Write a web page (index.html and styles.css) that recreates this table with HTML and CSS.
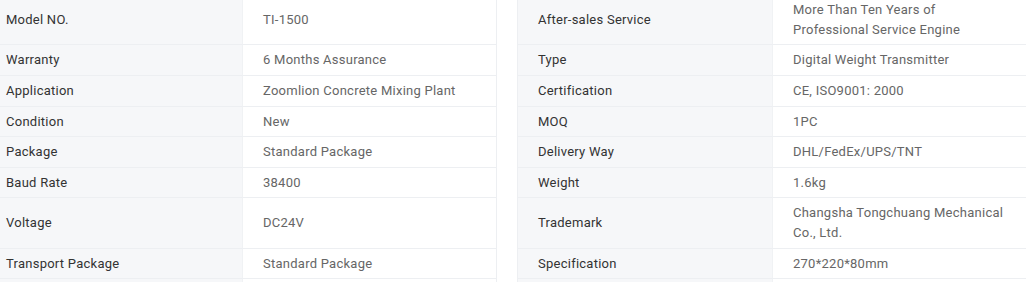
FILE: index.html
```html
<!DOCTYPE html>
<html lang="en">
<head>
<meta charset="utf-8">
<title>Specifications</title>
<link rel="stylesheet" href="styles.css">
</head>
<body>
<div class="specs">
  <div class="k k1">Model NO.</div><div class="v v1">TI-1500</div>
  <div class="k k2">After-sales Service</div><div class="v v2">More Than Ten Years of Professional Service Engine</div>

  <div class="k k1">Warranty</div><div class="v v1">6 Months Assurance</div>
  <div class="k k2">Type</div><div class="v v2">Digital Weight Transmitter</div>

  <div class="k k1">Application</div><div class="v v1">Zoomlion Concrete Mixing Plant</div>
  <div class="k k2">Certification</div><div class="v v2">CE, ISO9001: 2000</div>

  <div class="k k1">Condition</div><div class="v v1">New</div>
  <div class="k k2">MOQ</div><div class="v v2">1PC</div>

  <div class="k k1">Package</div><div class="v v1">Standard Package</div>
  <div class="k k2">Delivery Way</div><div class="v v2">DHL/FedEx/UPS/TNT</div>

  <div class="k k1">Baud Rate</div><div class="v v1">38400</div>
  <div class="k k2">Weight</div><div class="v v2">1.6kg</div>

  <div class="k k1">Voltage</div><div class="v v1">DC24V</div>
  <div class="k k2">Trademark</div><div class="v v2">Changsha Tongchuang Mechanical Co., Ltd.</div>

  <div class="k k1">Transport Package</div><div class="v v1">Standard Package</div>
  <div class="k k2">Specification</div><div class="v v2">270*220*80mm</div>

  <div class="k k1">&nbsp;</div><div class="v v1">&nbsp;</div>
  <div class="k k2">&nbsp;</div><div class="v v2">&nbsp;</div>
</div>
</body>
</html>
```
FILE: styles.css
```css
html, body {
  margin: 0;
  padding: 0;
  background: #ffffff;
  overflow: hidden;
}
body {
  font-family: Roboto, "Liberation Sans", Arial, sans-serif;
  font-size: 13px;
  line-height: 19.625px;
  letter-spacing: 0.25px;
}
.specs {
  display: grid;
  grid-template-columns: 256px 255px 275px 1fr;
  margin-left: -14px;
  margin-top: -5px;
  width: 1055px;
}
.k, .v {
  display: flex;
  align-items: center;
  padding: 5px 20px;
  border-bottom: 1px solid #edeff2;
  box-sizing: border-box;
}
.k {
  background: #f6f7f9;
  color: #333333;
}
.v {
  background: #ffffff;
  color: #666666;
  border-left: 1px solid #f0f2f4;
}
.v1 {
  border-right: 1px solid #edeff2;
}
.k2 {
  margin-left: 20px;
  border-left: 1px solid #edeff2;
}
.v2 {
  padding-right: 32px;
}
```
